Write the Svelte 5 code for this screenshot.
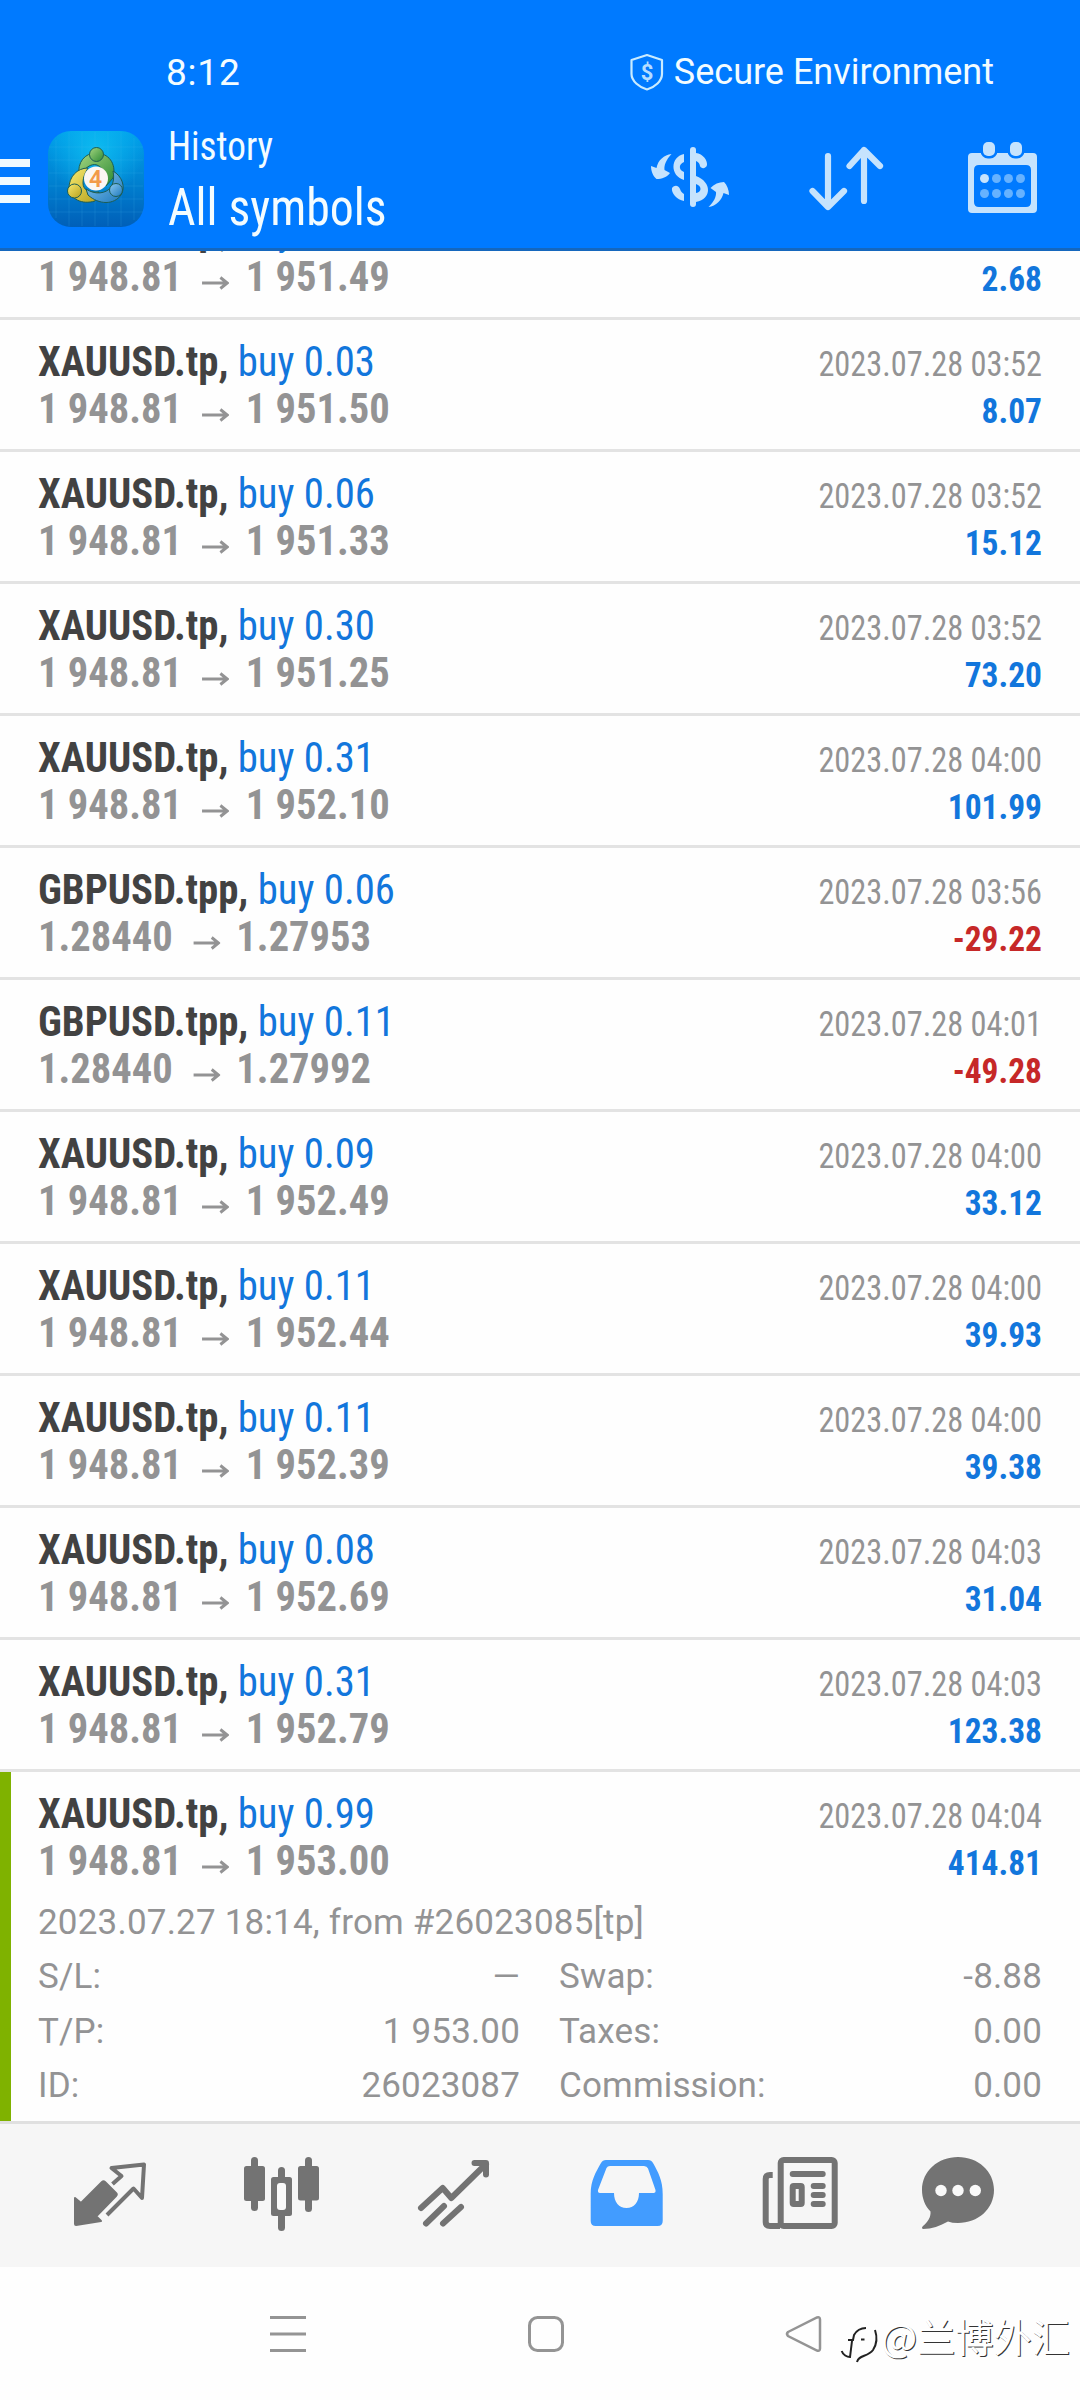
<script>
  const deals = [
    { symbol: 'XAUUSD.tp', volume: '0.03', open: '1 948.81', close: '1 951.50', time: '2023.07.28 03:52', profit: '8.07' },
    { symbol: 'XAUUSD.tp', volume: '0.06', open: '1 948.81', close: '1 951.33', time: '2023.07.28 03:52', profit: '15.12' },
    { symbol: 'XAUUSD.tp', volume: '0.30', open: '1 948.81', close: '1 951.25', time: '2023.07.28 03:52', profit: '73.20' },
    { symbol: 'XAUUSD.tp', volume: '0.31', open: '1 948.81', close: '1 952.10', time: '2023.07.28 04:00', profit: '101.99' },
    { symbol: 'GBPUSD.tpp', volume: '0.06', open: '1.28440', close: '1.27953', time: '2023.07.28 03:56', profit: '-29.22' },
    { symbol: 'GBPUSD.tpp', volume: '0.11', open: '1.28440', close: '1.27992', time: '2023.07.28 04:01', profit: '-49.28' },
    { symbol: 'XAUUSD.tp', volume: '0.09', open: '1 948.81', close: '1 952.49', time: '2023.07.28 04:00', profit: '33.12' },
    { symbol: 'XAUUSD.tp', volume: '0.11', open: '1 948.81', close: '1 952.44', time: '2023.07.28 04:00', profit: '39.93' },
    { symbol: 'XAUUSD.tp', volume: '0.11', open: '1 948.81', close: '1 952.39', time: '2023.07.28 04:00', profit: '39.38' },
    { symbol: 'XAUUSD.tp', volume: '0.08', open: '1 948.81', close: '1 952.69', time: '2023.07.28 04:03', profit: '31.04' },
    { symbol: 'XAUUSD.tp', volume: '0.31', open: '1 948.81', close: '1 952.79', time: '2023.07.28 04:03', profit: '123.38' },
    { symbol: 'XAUUSD.tp', volume: '0.99', open: '1 948.81', close: '1 953.00', time: '2023.07.28 04:04', profit: '414.81', expanded: true }
  ];
  // half scrolled under the header
  const first = { symbol: 'XAUUSD.tp', volume: '0.01', open: '1 948.81', close: '1 951.49', time: '2023.07.28 03:52', profit: '2.68' };

  const details = [
    ['S/L:', '—', 'Swap:', '-8.88'],
    ['T/P:', '1 953.00', 'Taxes:', '0.00'],
    ['ID:', '26023087', 'Commission:', '0.00']
  ];
</script>

{#snippet summary(deal)}
  <div class="summary">
    <div class="left">
      <div class="title"><b>{deal.symbol},</b> <span class="side">buy {deal.volume}</span></div>
      <div class="prices">
        <span>{deal.open}</span>
        <svg class="arrow" viewBox="0 0 28 14"><path d="M0 7H26M19 1.5L26 7L19 12.5" /></svg>
        <span>{deal.close}</span>
      </div>
    </div>
    <div class="right">
      <div class="time">{deal.time}</div>
      <div class="profit" class:loss={deal.profit.startsWith('-')}>{deal.profit}</div>
    </div>
  </div>
{/snippet}

<div class="screen">
  <header>
    <div class="status">
      <span class="clock">8:12</span>
      <span class="secure">
        <svg width="34" height="38" viewBox="631 53 34 38">
          <path d="M648 55L663 60V74C663 81 656 87 648 89.500C640 87 632.500 81 632.500 74V60Z" fill="none" stroke="#c9ebff" stroke-width="2.200" stroke-linejoin="round" />
          <text x="648" y="80" text-anchor="middle" font-size="22" font-weight="700" fill="#b5ddff">$</text>
        </svg>
        <span>Secure Environment</span>
      </span>
    </div>
    <div class="appbar">
      <svg class="burger" width="30" height="44" viewBox="0 0 30 44"><path d="M0 4H30M0 22H30M0 40H30" stroke="#effaff" stroke-width="8" /></svg>
      <svg class="logo" width="96" height="96" viewBox="48 131 96 96">
        <defs>
          <linearGradient id="tile" x1="0" y1="0" x2="0" y2="1">
            <stop offset="0" stop-color="#00a0ea" /><stop offset=".5" stop-color="#0083d2" /><stop offset="1" stop-color="#005fb8" />
          </linearGradient>
          <radialGradient id="glow" cx=".5" cy=".2" r=".5">
            <stop offset="0" stop-color="#10c4f4" stop-opacity=".8" /><stop offset="1" stop-color="#10c4f4" stop-opacity="0" />
          </radialGradient>
          <linearGradient id="green" x1="0" y1="0" x2="1" y2="1"><stop offset="0" stop-color="#a5d680" /><stop offset="1" stop-color="#2c8a35" /></linearGradient>
          <linearGradient id="gold" x1="0" y1="0" x2="1" y2="1"><stop offset="0" stop-color="#f8ea70" /><stop offset="1" stop-color="#b5a01c" /></linearGradient>
          <linearGradient id="sky" x1="0" y1="0" x2="1" y2="1"><stop offset="0" stop-color="#8cc9f0" /><stop offset="1" stop-color="#1c78bd" /></linearGradient>
        </defs>
        <rect x="48" y="131" width="96" height="96" rx="23" fill="url(#tile)" />
        <rect x="48" y="131" width="96" height="96" rx="23" fill="url(#glow)" />
        <path d="M56 140V218M69 132V226M82 132V226M95 132V226M108 132V226M121 132V226M134 138V220M49 147H143M49 160H143M49 173H143M49 186H143M49 199H143M49 212H143" stroke="#4ac0f0" stroke-opacity=".16" fill="none" />
        <g stroke="#1d5d53" stroke-width="1">
          <path d="M79 176C77 162 85 153 96 153C108 153 117 163 113 178L106 186C107 176 104 168 97 165C91 163 85 168 79 176Z" fill="url(#green)" />
          <path d="M88 168C77 168 69 177 69 188C70 199 82 205 95 201L99 192C89 193 83 190 83 183C83 176 86 172 88 168Z" fill="url(#gold)" />
          <path d="M113 171C122 176 126 187 121 195C114 205 99 205 88 195L86 189C95 195 106 194 111 187C114 182 114 176 113 171Z" fill="url(#sky)" />
          <circle cx="96.500" cy="154.500" r="7" fill="url(#green)" />
          <circle cx="74.500" cy="191" r="7" fill="url(#gold)" />
          <circle cx="116" cy="190" r="6.500" fill="url(#sky)" />
        </g>
        <circle cx="96" cy="178.500" r="12" fill="#fbf6f3" />
        <text x="95.500" y="187" text-anchor="middle" font-size="23" font-weight="600" fill="#f29a48">4</text>
      </svg>
      <div class="heading">
        <div class="screen-name">History</div>
        <div class="filter">All symbols</div>
      </div>
      <svg class="tools" width="400" height="80" viewBox="640 137 400 80" fill="#c6e3fd">
        <rect x="690" y="147" width="6" height="60" rx="3" />
        <path d="M684 154C670 157 670 176 684 180V172C678.500 170 678.500 164 684 162Z" />
        <path d="M696 153C703 154 707.500 160 707 165C706 169 701 169 700 166C699.500 163 698 162 696 161Z" />
        <path d="M696 176C712 182 712 199 696 202V193C702 192 702 186 696 184Z" />
        <path d="M672 188C675 184 679 186 680 189C681 192 682.500 193 684 194V201C677 200 671 193 672 188Z" />
        <path d="M671.500 154C666 160 664 165 664.500 170L670 173C667 177 662 179 656.500 179C653 176 651 171 651 166L656.500 168C658 160 664 155 671.500 154Z" />
        <path d="M708.500 207C714 202 716.500 196 716 192L710.500 188C714 184 719 182 724 182C727 185 729 190 729 195L723.500 193C722 200 716 206 708.500 207Z" />
        <path d="M828 156V206M812.500 191L828 207L844 191M864 201V150M849.500 166L864 150L880 166" fill="none" stroke="#c6e3fd" stroke-width="6.200" stroke-linecap="round" stroke-linejoin="round" />
        <path fill-rule="evenodd" d="M972 153H1033Q1037 153 1037 157V209Q1037 213 1033 213H972Q968 213 968 209V157Q968 153 972 153ZM979 165Q974 165 974 170V202Q974 207 979 207H1026Q1031 207 1031 202V170Q1031 165 1026 165Z" />
        <rect x="983" y="142" width="12" height="14" rx="5" stroke="#007aff" stroke-width="5" paint-order="stroke" />
        <rect x="1010" y="142" width="12" height="14" rx="5" stroke="#007aff" stroke-width="5" paint-order="stroke" />
        <circle cx="984.500" cy="178.500" r="4.500" />
        <g fill="#66b2ff">
          <circle cx="996.500" cy="178.500" r="4.500" /><circle cx="1008.500" cy="178.500" r="4.500" /><circle cx="1020.500" cy="178.500" r="4.500" />
          <circle cx="984.500" cy="193.500" r="4.500" /><circle cx="996.500" cy="193.500" r="4.500" /><circle cx="1008.500" cy="193.500" r="4.500" /><circle cx="1020.500" cy="193.500" r="4.500" />
        </g>
      </svg>
    </div>
  </header>

  <main>
    <section class="deal clipped">{@render summary(first)}</section>
    {#each deals as deal}
      <section class="deal" class:expanded={deal.expanded}>
        {@render summary(deal)}
        {#if deal.expanded}
          <div class="origin">2023.07.27 18:14, from #26023085[tp]</div>
          <div class="details">
            {#each details as [name, value, name2, value2]}
              <span>{name}</span><span class="value">{value}</span>
              <span class="second">{name2}</span><span class="value">{value2}</span>
            {/each}
          </div>
        {/if}
      </section>
    {/each}
  </main>

  <nav class="tabs">
    <svg width="1080" height="143" viewBox="0 2124 1080 143" fill="#737373" stroke-linecap="round" stroke-linejoin="round">
      <path d="M75 2198L81 2203L102 2182Q103.500 2180.500 105 2182L116 2193Q117.500 2194.500 116 2196L97 2215.500Q96 2216.500 97.500 2217.500L101 2221L76 2225Q75 2225 75 2224Z" stroke="#737373" stroke-width="2" />
      <path d="M112.500 2184L121.500 2176L111.500 2168L144 2164.500L142 2198L133.500 2188.500L107 2215" fill="none" stroke="#737373" stroke-width="4" stroke-linecap="butt" stroke-linejoin="round" />
      <g>
        <rect x="251" y="2157" width="7" height="54" rx="3.500" /><rect x="244" y="2166" width="21" height="35" rx="2.500" />
        <rect x="305" y="2157" width="7" height="55" rx="3.500" /><rect x="298" y="2166" width="21" height="34.500" rx="2.500" />
        <rect x="278" y="2167" width="7" height="64" rx="3.500" /><rect x="271" y="2177" width="21" height="39" rx="2.500" />
        <rect x="277" y="2183" width="9" height="27" rx="3" fill="#f9f9f9" />
      </g>
      <g fill="none" stroke="#737373" stroke-width="6">
        <path d="M421 2208L442.700 2188L451.300 2198L486 2164M474.500 2163H486V2174.500" />
        <path d="M426 2223.500L444 2206M443 2223.500L461 2207" />
      </g>
      <path fill="#429cff" fill-rule="evenodd" d="M606 2160H648Q651.500 2160 653 2163C658 2172 662.700 2180 662.700 2194V2221Q662.700 2226 657.700 2226H595.700Q590.700 2226 590.700 2221V2194C590.700 2180 596 2172 601 2163Q602.500 2160 606 2160ZM610 2166Q607.500 2166 606.500 2168L598 2190Q597.500 2193 600 2193H614C614 2202 619 2208 626.500 2208C634 2208 639 2202 639 2193H653.500Q656 2193 655.500 2190L648 2168.500Q647 2166 644 2166Z" />
      <g fill="none" stroke="#737373" stroke-width="6">
        <rect x="780.700" y="2160" width="54" height="66" rx="3" />
        <path d="M772.700 2175H770Q765.700 2175 765.700 2179V2222Q765.700 2226 770 2226H780" stroke-linecap="butt" />
        <path d="M792.700 2174H822.700M813.700 2186H822.700M813.700 2195H822.700M813.700 2204H822.700" />
        <rect x="792.700" y="2186" width="9" height="18" rx="1" />
      </g>
      <path d="M958 2157C978 2157 994 2171 994 2190C994 2209 978 2223 958 2223Q952 2223 948 2221.500C940 2226 932 2229 923 2229Q921 2228 923 2226C928 2222 931 2217 930.500 2211.500C925 2206 922 2198 922 2190C922 2171 938 2157 958 2157Z" />
      <g fill="#f9f9f9"><circle cx="941" cy="2190.500" r="5.700" /><circle cx="958" cy="2190.500" r="5.700" /><circle cx="975.300" cy="2190.500" r="5.700" /></g>
    </svg>
  </nav>

  <footer class="system">
    <svg width="600" height="133" viewBox="240 2267 600 133" fill="none" stroke="#949494" stroke-width="3">
      <path d="M270 2317.500H306M270 2334H306M270 2350.500H306" />
      <rect x="529.500" y="2317.500" width="33" height="33" rx="8" />
      <path d="M788 2332L817 2317.500Q820 2316.500 820 2319.500V2348.500Q820 2351.500 817 2350.500L788 2336Q786 2334 788 2332Z" stroke-width="2.500" />
    </svg>
    <div class="watermark">
      <svg width="41" height="60" viewBox="840 2305 41 60">
        <path d="M841.700 2351C843 2355 847 2357 850 2357L852 2341M848 2340H853L854 2335Q858 2328 866 2328M861 2339.500H864.500" />
        <path d="M875 2330C877 2336 877 2344 873 2350C868 2357 858 2355 857 2362" />
      </svg>
      <span>@兰博外汇</span>
    </div>
  </footer>
</div>

<style>
  :global(body) {
    background: #fff;
  }

  .screen {
    width: 1080px;
    height: 2400px;
    overflow: hidden;
    display: flex;
    flex-direction: column;
    background: #fefefe;
    color: #939394;
    font-family: Roboto, sans-serif;
  }

  header {
    flex: none;
    box-sizing: border-box;
    height: 251px;
    background: #007aff;
    border-bottom: 3px solid #1567bd;
    color: #f3fcff;
  }

  .status {
    height: 70px;
    padding: 37px 86px 0 166px;
    display: flex;
    align-items: center;
    justify-content: space-between;
  }

  .clock {
    padding-top: 1px;
    font-size: 37px;
    font-weight: 450;
    letter-spacing: 0.8px;
  }

  .secure {
    display: flex;
    align-items: center;
    gap: 10px;
    font-size: 36px;
  }

  .appbar {
    display: flex;
    align-items: center;
    height: 140px;
    padding-right: 40px;
  }

  .burger {
    margin-top: 8px;
  }

  .logo {
    margin: 4px 24px 0 18px;
  }

  .heading {
    font-family: 'Roboto Condensed', Roboto, sans-serif;
    font-stretch: 75%;
    flex: 1;
    white-space: nowrap;
  }

  .screen-name {
    font-size: 40px;
    line-height: 60px;
    transform: scaleX(0.93);
    transform-origin: left;
  }

  .filter {
    font-size: 52px;
    line-height: 61px;
    transform: scaleX(0.919);
    transform-origin: left;
  }

  main {
    height: 1873px;
    flex: none;
  }

  .deal {
    box-sizing: border-box;
    height: 132px;
    padding: 18px 38px 0 38px;
    border-bottom: 3px solid #e3e3e3;
  }

  .deal.clipped {
    height: 69px;
    padding-top: 0;
    display: flex;
    flex-direction: column;
    justify-content: flex-end;
    overflow: hidden;
  }

  .clipped .summary {
    height: 111px;
    flex: none;
  }

  .deal.expanded {
    height: 352px;
    box-shadow: inset 11px 0 #7fb200;
    border-bottom-color: #e0e0e0;
  }

  .summary {
    display: flex;
    justify-content: space-between;
    font-family: 'Roboto Condensed', Roboto, sans-serif;
    font-stretch: 75%;
    white-space: nowrap;
  }

  .title {
    font-size: 42px;
    line-height: 47px;
    transform: scaleX(0.97);
    transform-origin: left;
  }

  .title b {
    color: #424242;
  }

  .side {
    color: #1276dc;
  }

  .prices {
    display: flex;
    align-items: center;
    font-size: 42px;
    line-height: 47px;
    font-weight: 700;
    transform: scaleX(0.965);
    transform-origin: left;
  }

  .arrow {
    width: 28px;
    height: 14px;
    margin: 12px 17px 0 21px;
    fill: none;
    stroke: #939394;
    stroke-width: 3px;
  }

  .right {
    padding-top: 3px;
    text-align: right;
  }

  .time,
  .profit {
    font-size: 35px;
    line-height: 47px;
    transform: scaleX(0.924);
    transform-origin: right;
  }

  .profit {
    font-weight: 700;
    color: #1276dc;
    transform: scaleX(0.955);
  }

  .profit.loss {
    color: #c62828;
  }

  .origin {
    margin-top: 9px;
    font-size: 35px;
    line-height: 54px;
    letter-spacing: 0.2px;
  }

  .details {
    display: grid;
    grid-template-columns: 160px 322px 260px 262px;
    font-size: 35px;
    line-height: 54.5px;
    letter-spacing: 0.15px;
  }

  .value {
    text-align: right;
  }

  .second {
    padding-left: 39px;
  }

  .tabs {
    flex: none;
    height: 143px;
    background: #f6f6f6;
  }

  .system {
    display: flex;
    padding-left: 240px;
    height: 133px;
  }

  .watermark {
    display: flex;
    align-items: center;
    margin-top: 8px;
    height: 120px;
    font-family: 'Noto Sans CJK SC', sans-serif;
    font-size: 38.2px;
    color: #fff;
    text-shadow: 1px 1px 0.5px #333;
    white-space: nowrap;
  }

  .watermark path {
    fill: none;
    stroke: #222;
    stroke-width: 2px;
  }
</style>
